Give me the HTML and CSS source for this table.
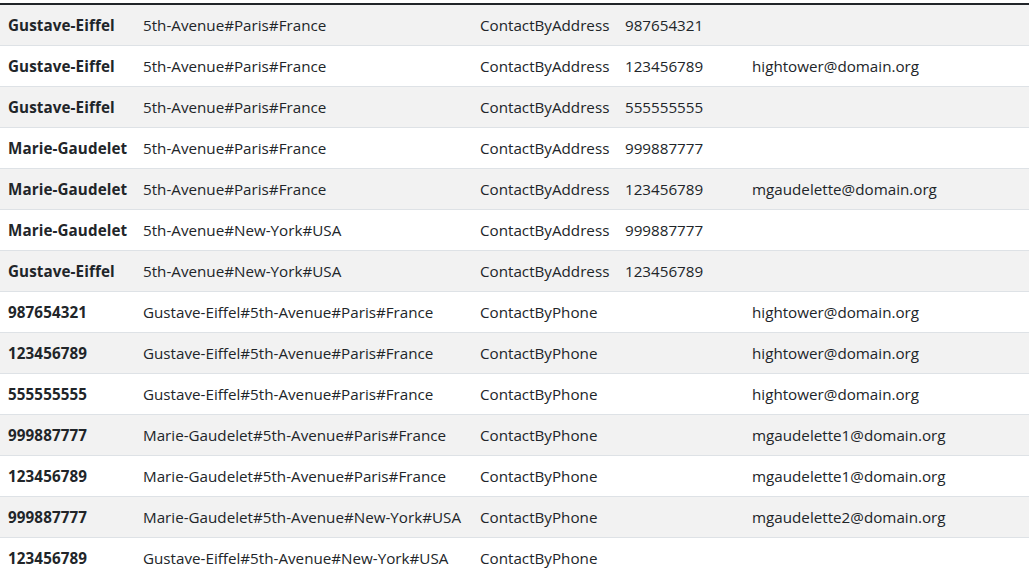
FILE: index.html
```html
<!DOCTYPE html>
<html>
<head>
<meta charset="utf-8">
<link rel="stylesheet" href="styles.css">
</head>
<body>
<div class="wrap">
<table class="table">
<colgroup><col class="c1"><col class="c2"><col class="c3"><col class="c4"><col class="c5"></colgroup>
<tbody>
<tr><th>Gustave-Eiffel</th><td>5th-Avenue#Paris#France</td><td>ContactByAddress</td><td>987654321</td><td></td></tr>
<tr><th>Gustave-Eiffel</th><td>5th-Avenue#Paris#France</td><td>ContactByAddress</td><td>123456789</td><td>hightower@domain.org</td></tr>
<tr><th>Gustave-Eiffel</th><td>5th-Avenue#Paris#France</td><td>ContactByAddress</td><td>555555555</td><td></td></tr>
<tr><th>Marie-Gaudelet</th><td>5th-Avenue#Paris#France</td><td>ContactByAddress</td><td>999887777</td><td></td></tr>
<tr><th>Marie-Gaudelet</th><td>5th-Avenue#Paris#France</td><td>ContactByAddress</td><td>123456789</td><td>mgaudelette@domain.org</td></tr>
<tr><th>Marie-Gaudelet</th><td>5th-Avenue#New-York#USA</td><td>ContactByAddress</td><td>999887777</td><td></td></tr>
<tr><th>Gustave-Eiffel</th><td>5th-Avenue#New-York#USA</td><td>ContactByAddress</td><td>123456789</td><td></td></tr>
<tr><th>987654321</th><td>Gustave-Eiffel#5th-Avenue#Paris#France</td><td>ContactByPhone</td><td></td><td>hightower@domain.org</td></tr>
<tr><th>123456789</th><td>Gustave-Eiffel#5th-Avenue#Paris#France</td><td>ContactByPhone</td><td></td><td>hightower@domain.org</td></tr>
<tr><th>555555555</th><td>Gustave-Eiffel#5th-Avenue#Paris#France</td><td>ContactByPhone</td><td></td><td>hightower@domain.org</td></tr>
<tr><th>999887777</th><td>Marie-Gaudelet#5th-Avenue#Paris#France</td><td>ContactByPhone</td><td></td><td>mgaudelette1@domain.org</td></tr>
<tr><th>123456789</th><td>Marie-Gaudelet#5th-Avenue#Paris#France</td><td>ContactByPhone</td><td></td><td>mgaudelette1@domain.org</td></tr>
<tr><th>999887777</th><td>Marie-Gaudelet#5th-Avenue#New-York#USA</td><td>ContactByPhone</td><td></td><td>mgaudelette2@domain.org</td></tr>
<tr><th>123456789</th><td>Gustave-Eiffel#5th-Avenue#New-York#USA</td><td>ContactByPhone</td><td></td><td></td></tr>
</tbody>
</table>
</div>
</body>
</html>
```

FILE: styles.css
```css
html, body {
  margin: 0;
  padding: 0;
  background: #fff;
}
body {
  font-family: "Open Sans", "Noto Sans", sans-serif;
  font-size: 15.2px;
  line-height: 24px;
  color: #212529;
  overflow: hidden;
}
.wrap {
  padding-top: 3px;
}
.table {
  width: 1029px;
  border-collapse: collapse;
  table-layout: fixed;
  border-top: 2px solid #212529;
}
.c1 { width: 135px; }
.c2 { width: 337px; }
.c3 { width: 145px; }
.c4 { width: 127px; }
.c5 { width: 285px; }
.table th, .table td {
  padding: 8px;
  text-align: left;
  vertical-align: top;
  white-space: nowrap;
  border-top: 1px solid #dee2e6;
}
.table tr:first-child th, .table tr:first-child td {
  border-top: none;
}
.table th {
  font-weight: 700;
  letter-spacing: 0.1px;
}
.table td {
  font-weight: 400;
}
.table tbody tr:nth-child(odd) {
  background: #f2f2f2;
}
```
